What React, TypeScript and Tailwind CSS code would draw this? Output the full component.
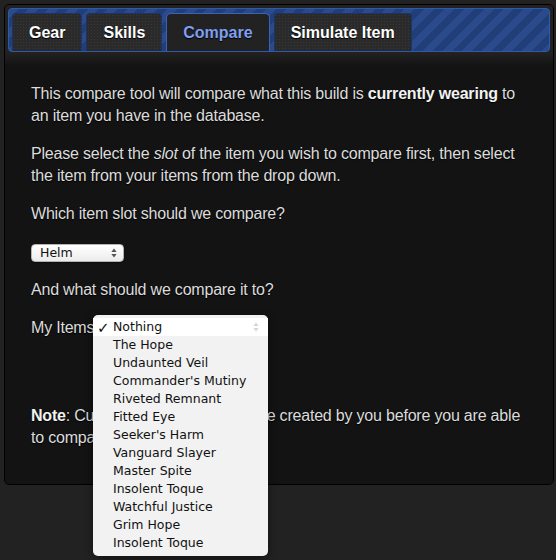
import React from "react";

const items = [
  "Nothing",
  "The Hope",
  "Undaunted Veil",
  "Commander's Mutiny",
  "Riveted Remnant",
  "Fitted Eye",
  "Seeker's Harm",
  "Vanguard Slayer",
  "Master Spite",
  "Insolent Toque",
  "Watchful Justice",
  "Grim Hope",
  "Insolent Toque",
];

function Tab({ label, active }: { label: string; active?: boolean }) {
  if (active) {
    return (
      <div className="flex h-[38px] items-center rounded-t-[5px] border border-b-0 border-[#3a63b8] bg-[#222222] px-4 text-[16px] font-bold text-[#7f9ff0] [text-shadow:0_1px_1px_#000]">
        {label}
      </div>
    );
  }
  return (
    <div className="flex h-[38px] items-center rounded-t-[4px] border border-b-0 border-[#1d3466] bg-[#2a2a2a] bg-[radial-gradient(#383838_0.8px,transparent_1px)] bg-[length:3px_3px] px-4 text-[16px] font-bold text-white [text-shadow:0_1px_1px_#000]">
      {label}
    </div>
  );
}

function UpDown({ color }: { color: string }) {
  return (
    <svg width="6" height="10" viewBox="0 0 6 10">
      <path d="M3 0.5 L5.6 4 L0.4 4 Z" fill={color} />
      <path d="M3 9.5 L5.6 6 L0.4 6 Z" fill={color} />
    </svg>
  );
}

export default function App() {
  return (
    <div className="relative h-[560px] w-[556px] overflow-hidden bg-[#222222] pt-[4px] font-['Liberation_Sans',Arial,sans-serif]">
      <div className="ml-[4px] w-[550px] overflow-hidden rounded-[5px] border border-black bg-[#131313]">
        <div className="bg-[#212121] px-[3px] pt-[3px]">
          <div className="flex h-[44px] items-end gap-[4px] rounded-[4px] border border-[#2f5aa8] bg-[#233f7a] bg-[repeating-linear-gradient(135deg,#2a4a8b_0px,#2a4a8b_7px,#213e79_7px,#213e79_14px)] pl-[3px] pt-[4px]">
            <Tab label="Gear" />
            <Tab label="Skills" />
            <Tab label="Compare" active />
            <Tab label="Simulate Item" />
          </div>
        </div>
        <div className="bg-[linear-gradient(#222222_0px,#1c1c1c_6px,#131313_14px)] px-[26px] pb-[35px] pt-[31px] text-[16px] leading-[22px] tracking-[-0.2px] text-[#dcdcdc] [text-shadow:0_1px_1px_#000]">
          <p className="mb-4">
            This compare tool will compare what this build is{" "}
            <b className="text-[#f2f2f2]">currently wearing</b> to an item you have in the database.
          </p>
          <p className="mb-4">
            Please select the <i>slot</i> of the item you wish to compare first, then select the item from your
            items from the drop down.
          </p>
          <p className="mb-4">Which item slot should we compare?</p>
          <div className="mb-4 h-[22px] pt-[3px]">
            <div className="flex h-[18px] w-[93px] items-center justify-between rounded-[4px] border border-[#b4b4b4] bg-[linear-gradient(#ffffff,#f6f6f6_50%,#ebebeb)] pl-[8px] pr-[6px] font-['DejaVu_Sans',sans-serif] text-[12.5px] leading-none tracking-normal text-[#111] [text-shadow:none] shadow-[0_1px_1px_rgba(0,0,0,0.4)]">
              <span>Helm</span>
              <UpDown color="#555" />
            </div>
          </div>
          <p className="mb-4">And what should we compare it to?</p>
          <p className="mb-[66px]">My Items</p>
          <p>
            <b className="text-[#f2f2f2]">Note</b>: Currently, the item HAS to be created by you before you are able
            <br />
            to compare it.
          </p>
        </div>
      </div>

      <div className="absolute left-[93px] top-[315px] w-[175px] rounded-[5px] bg-[#f2f2f2] pb-[4px] pt-[3px] font-['DejaVu_Sans',sans-serif] text-[12.5px] text-[#111] shadow-[0_3px_10px_rgba(0,0,0,0.45)]">
        {items.map((it, i) => (
          <div
            key={i}
            className={
              i === 0
                ? "relative flex h-[18px] items-center bg-white pl-[20px]"
                : "flex h-[18px] items-center pl-[20px]"
            }
          >
            {i === 0 && <span className="absolute left-[4px] top-[-1px] text-[15px]">✓</span>}
            <span>{it}</span>
            {i === 0 && (
              <span className="absolute right-[9px] top-[4px]">
                <UpDown color="#d6d6d6" />
              </span>
            )}
          </div>
        ))}
      </div>
    </div>
  );
}
